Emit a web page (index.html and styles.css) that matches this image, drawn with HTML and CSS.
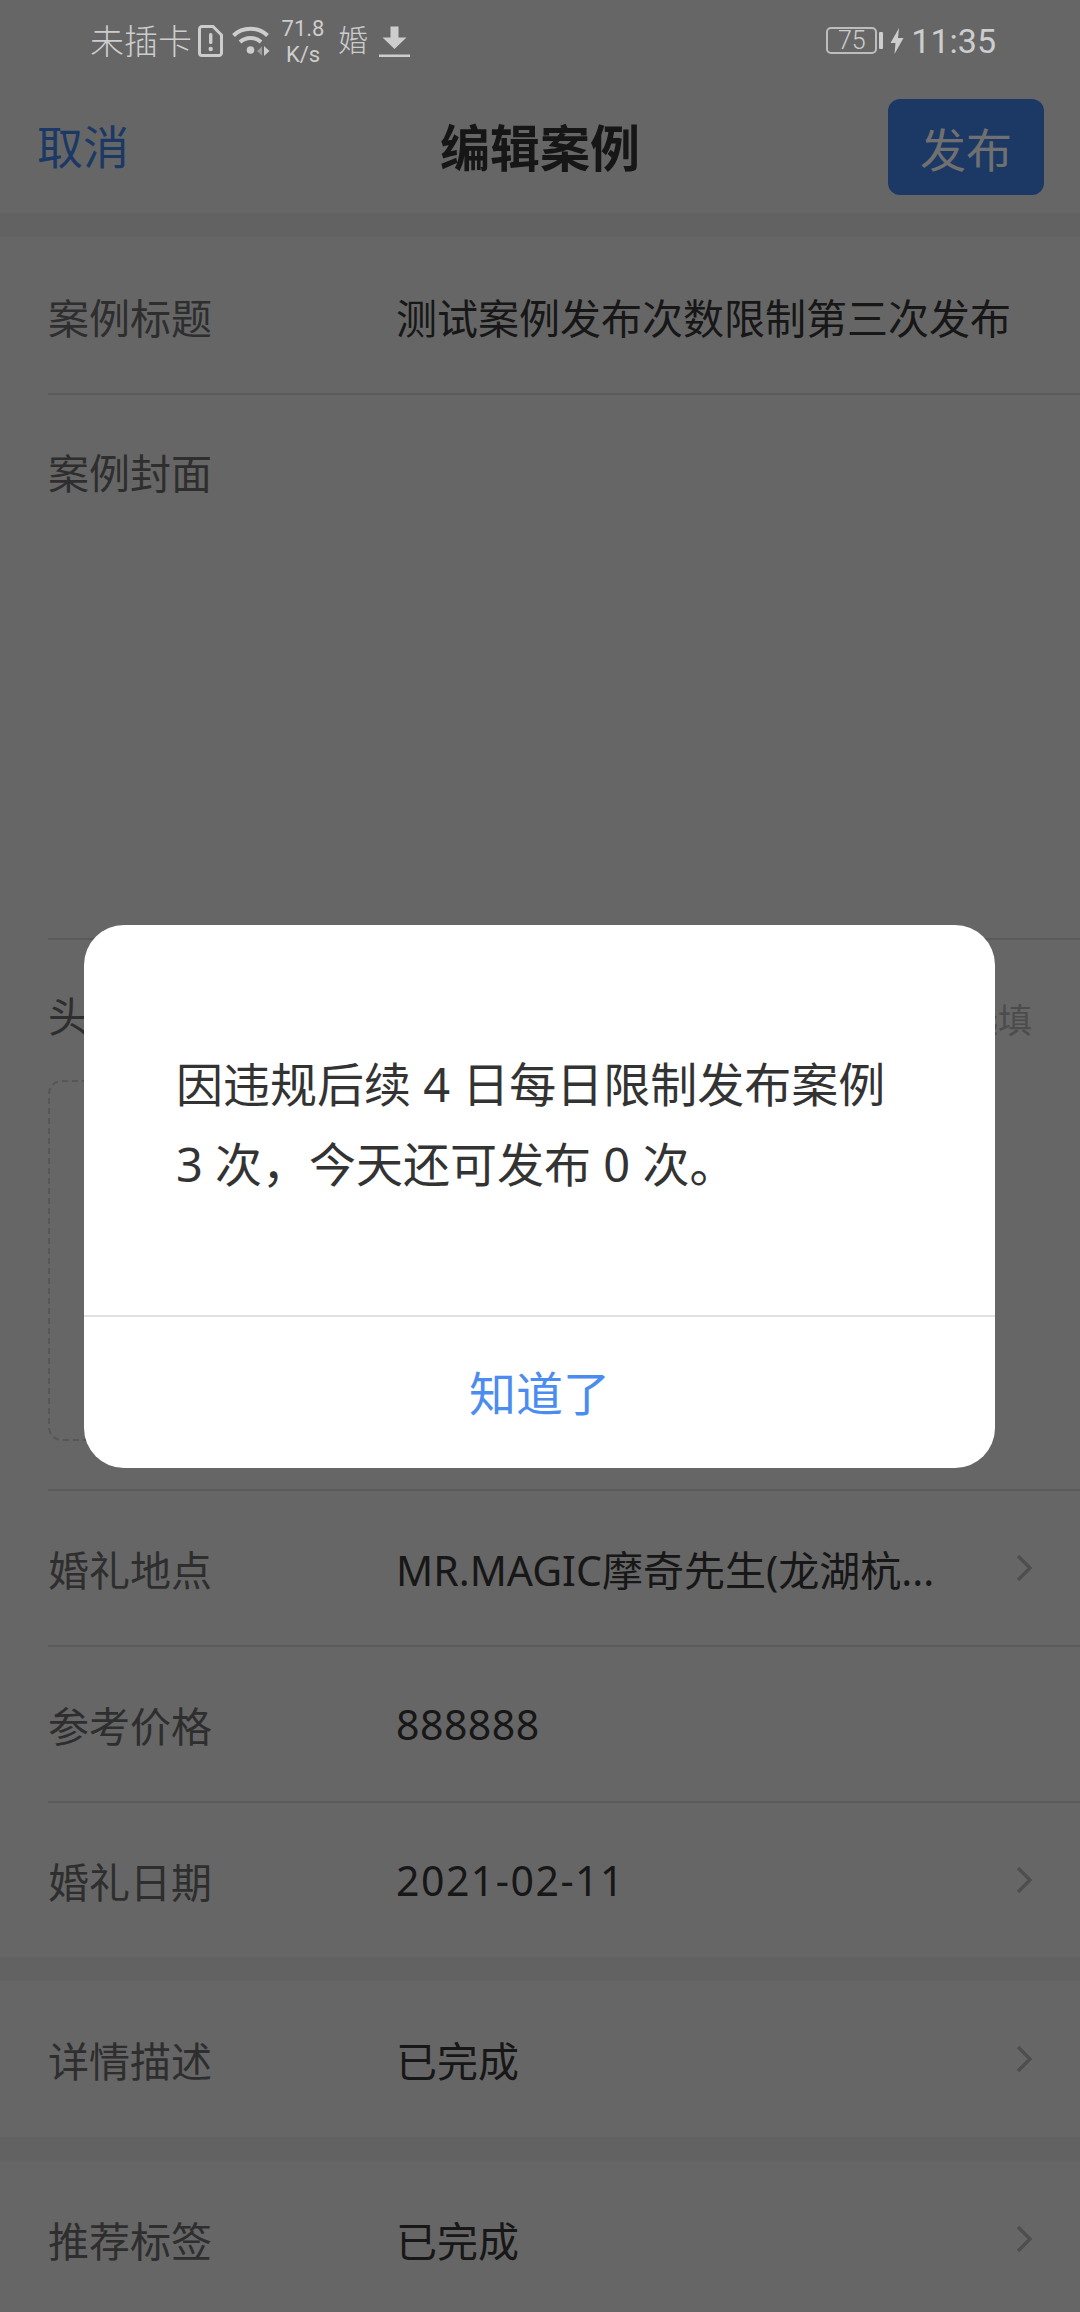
FILE: index.html
```html
<!DOCTYPE html>
<html lang="zh-CN">
<head>
  <meta charset="UTF-8">
  <title>编辑案例</title>
  <link rel="stylesheet" href="styles.css">
</head>
<body>
<div class="screen">

  <!-- page under the scrim -->
  <header class="topbar">
    <span class="cancel">取消</span>
    <span class="title">编辑案例</span>
    <span class="publish"><span class="publish-text">发布</span></span>
  </header>

  <div class="band"></div>

  <section class="group">
    <div class="row row-first"><span class="label">案例标题</span><span class="value">测试案例发布次数限制第三次发布</span></div>
    <div class="row row-cover"><span class="label">案例封面</span></div>
    <div class="row row-head">
      <div class="head-line"><span class="label">头图</span><span class="hint">选填</span></div>
      <div class="upload"></div>
    </div>
    <div class="row">
      <span class="label">婚礼地点</span><span class="value">MR.MAGIC摩奇先生(龙湖杭...</span>
      <svg class="chev" viewBox="0 0 16 28"><path d="M2 2l12 12L2 26"/></svg>
    </div>
    <div class="row"><span class="label">参考价格</span><span class="value price">888888</span></div>
    <div class="row row-date">
      <span class="label">婚礼日期</span><span class="value date">2021-02-11</span>
      <svg class="chev" viewBox="0 0 16 28"><path d="M2 2l12 12L2 26"/></svg>
    </div>
  </section>

  <div class="band"></div>

  <section class="group">
    <div class="row row-last">
      <span class="label">详情描述</span><span class="value">已完成</span>
      <svg class="chev" viewBox="0 0 16 28"><path d="M2 2l12 12L2 26"/></svg>
    </div>
  </section>

  <div class="band"></div>

  <section class="group">
    <div class="row row-last">
      <span class="label">推荐标签</span><span class="value">已完成</span>
      <svg class="chev" viewBox="0 0 16 28"><path d="M2 2l12 12L2 26"/></svg>
    </div>
  </section>

  <!-- scrim and dialog -->
  <div class="scrim">
    <div class="dialog">
      <p class="dialog-text">因违规后续 4 日每日限制发布案例<br>3 次，今天还可发布 0 次。</p>
      <div class="dialog-btn">知道了</div>
    </div>
  </div>

  <!-- status bar stays above the scrim -->
  <div class="statusbar">
    <div class="status-left">
      <span class="carrier">未插卡</span>
      <svg class="ic-sim" viewBox="0 0 25 32">
        <path d="M4 1.500h11l8.500 8.500v18a2.500 2.500 0 0 1-2.500 2.500H4A2.500 2.500 0 0 1 1.500 28V4A2.500 2.500 0 0 1 4 1.500z"/>
        <rect x="11" y="8" width="3.400" height="11" rx="1.500"/>
        <circle cx="12.700" cy="24" r="2.200"/>
      </svg>
      <svg class="ic-wifi" viewBox="0 0 38 32">
        <path class="arc" d="M1.500 10.500C10.500 1.500 26.500 1.500 35.500 10.500"/>
        <path class="arc" d="M8 17c6-5.500 15-5.500 21 0"/>
        <circle class="dot" cx="18.500" cy="25" r="3.800"/>
        <path class="dot dim" d="M25 26l5-4.500v9z"/>
        <path class="dot" d="M32 21l5.500 5-5.500 5z"/>
      </svg>
      <div class="speed"><span>71.8</span><span>K/s</span></div>
      <span class="wed">婚</span>
      <svg class="ic-down" viewBox="0 0 31 32">
        <path class="dot" d="M11.500 1.500h8v11h8L15.500 24 3.500 12.500h8z"/>
        <rect class="dot" x="0" y="29.500" width="31" height="2.500"/>
      </svg>
    </div>
    <div class="status-right">
      <span class="battery">75</span>
      <span class="nub"></span>
      <svg class="ic-bolt" viewBox="0 0 13 26"><path class="dot" d="M8.500 0L0 15h5l-1 11 9-16H7.500z"/></svg>
      <span class="time">11:35</span>
    </div>
  </div>

</div>
</body>
</html>
```

FILE: styles.css
```css
* {
  box-sizing: border-box;
}
html, body {
  margin: 0;
  padding: 0;
}
body {
  font-family: "Noto Sans", "Noto Sans CJK SC", sans-serif;
  background: #fff;
}
.screen {
  position: relative;
  width: 1080px;
  height: 2312px;
  overflow: hidden;
  background: #fff;
}

/* top bar */
.topbar {
  height: 213px;
  padding: 99px 36px 18px 37px;
  display: flex;
  align-items: center;
  justify-content: space-between;
  position: relative;
}
.cancel {
  font-size: 46px;
  line-height: 66px;
  margin-bottom: 2px;
  color: #4690fd;
}
.title {
  position: absolute;
  left: 0;
  right: 0;
  top: 112px;
  text-align: center;
  font-size: 50px;
  line-height: 72px;
  font-weight: 700;
  color: #383838;
}
.publish {
  width: 156px;
  height: 96px;
  border-radius: 12px;
  background: #4690fd;
  font-size: 46px;
  display: flex;
  align-items: center;
  justify-content: center;
}
/* this label is brighter than anything dimmed by the scrim can be */
.publish-text {
  position: relative;
  z-index: 1;
  color: #707070;
}
.band {
  height: 24px;
  background: #f6f6f6;
}

/* form rows */
.row {
  height: 156px;
  margin-left: 48px;
  display: flex;
  align-items: center;
  border-bottom: 2px solid #e0e0e0;
  font-size: 41px;
}
.row-first {
  height: 158px;
  padding-top: 2px;
}
.row-date {
  height: 154px;
  border-bottom: none;
}
.row-last {
  border-bottom: none;
}
.row-cover {
  height: 545px;
  align-items: flex-start;
  padding-top: 46px;
}
.row-head {
  height: 551px;
  display: block;
  padding-top: 49px;
}
.label {
  width: 348px;
  flex: none;
  color: #747474;
}
.value {
  color: #3a3a3a;
}
.price {
  letter-spacing: .5px;
}
.date {
  letter-spacing: 1.5px;
}
.chev {
  flex: none;
  margin: 0 48px 0 auto;
  width: 16px;
  height: 28px;
  fill: none;
  stroke: #c4c4c4;
  stroke-width: 3.5;
}
.head-line {
  height: 54px;
  display: flex;
  justify-content: space-between;
  align-items: flex-start;
  padding-right: 48px;
  line-height: 54px;
}
.hint {
  font-size: 34px;
  color: #bdbdbd;
  padding-top: 4px;
}
.upload {
  width: 400px;
  height: 361px;
  margin-top: 37px;
  border: 2px dashed #d8d8d8;
  border-radius: 14px;
}

/* dialog */
.scrim {
  position: absolute;
  inset: 0;
  background: rgba(0, 0, 0, 0.6);
  display: flex;
  flex-direction: column;
  align-items: center;
  padding-top: 925px;
}
.dialog {
  width: 911px;
  height: 543px;
  margin-right: 1px;
  background: #fff;
  border-radius: 40px;
  display: flex;
  flex-direction: column;
}
.dialog-text {
  flex: 1;
  margin: 0;
  padding: 119px 60px 0 92px;
  font-size: 47px;
  line-height: 80px;
  color: #333;
}
.dialog-btn {
  height: 153px;
  padding-bottom: 4px;
  border-top: 2px solid #e0e0e0;
  display: flex;
  align-items: center;
  justify-content: center;
  font-size: 47px;
  color: #4a8cf0;
}

/* status bar */
.statusbar {
  position: absolute;
  left: 0;
  top: 0;
  width: 100%;
  height: 80px;
  padding: 0 84px 0 90px;
  display: flex;
  justify-content: space-between;
  color: #cdcdcd;
  font-family: Roboto, "Noto Sans CJK SC", sans-serif;
}
.status-left, .status-right {
  display: flex;
  align-items: flex-start;
}
.carrier {
  font-size: 34px;
  line-height: 44px;
  margin-top: 20px;
  font-weight: 300;
  margin-right: 6px;
}
.ic-sim {
  width: 25px;
  height: 32px;
  margin-top: 25px;
  fill: #cdcdcd;
}
.ic-sim path {
  fill: none;
  stroke: #cdcdcd;
  stroke-width: 3;
}
.ic-wifi {
  width: 38px;
  height: 32px;
  margin: 25px 0 0 9px;
}
.arc {
  fill: none;
  stroke: #cdcdcd;
  stroke-width: 4;
}
.dot {
  fill: #cdcdcd;
}
.dim {
  opacity: .5;
}
.speed {
  width: 46px;
  margin: 16px 0 0 10px;
  display: flex;
  flex-direction: column;
  align-items: center;
  font-size: 22px;
  line-height: 26px;
}
.wed {
  font-size: 30px;
  line-height: 40px;
  margin: 21px 0 0 12px;
  font-weight: 300;
}
.ic-down {
  width: 31px;
  height: 32px;
  margin: 25px 0 0 11px;
}
.battery {
  width: 51px;
  height: 27px;
  margin-top: 27px;
  border: 2px solid #bdbdbd;
  border-radius: 5px;
  font-size: 25px;
  line-height: 24px;
  text-align: center;
  font-weight: 300;
}
.nub {
  width: 4px;
  height: 17px;
  margin: 32px 0 0 2px;
  background: #cdcdcd;
  border-radius: 1px;
}
.ic-bolt {
  width: 14px;
  height: 26px;
  margin: 28px 0 0 7px;
}
.time {
  font-size: 34px;
  line-height: 40px;
  margin: 21px 0 0 7px;
}
```
